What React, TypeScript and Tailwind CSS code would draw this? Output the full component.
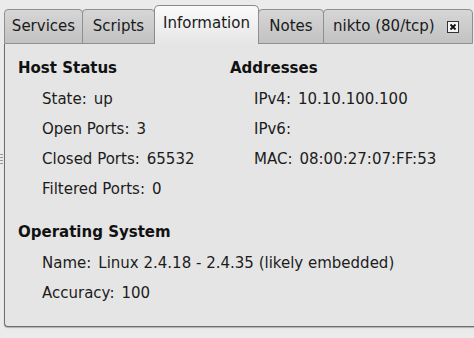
import React from "react";

const font = { fontFamily: '"DejaVu Sans", "Noto Sans", sans-serif' };

function Tab({ label, active, className, children }: { label: string; active?: boolean; className: string; children?: React.ReactNode }) {
  return (
    <div
      className={
        active
          ? `shrink-0 whitespace-nowrap h-[39px] flex items-center justify-center border border-b-0 border-[#8a8a8a] rounded-t-[5px] bg-gradient-to-b from-[#fafafa] to-[#e6e6e6] pb-[4px] ${className}`
          : `shrink-0 whitespace-nowrap h-[35px] flex items-center justify-center border border-[#8f8f8f] rounded-t-[4px] bg-gradient-to-b from-[#d6d6d6] to-[#c2c2c2] ${className}`
      }
    >
      <span className="text-[15px] text-[#1a1a1a] leading-none">{label}</span>
      {children}
    </div>
  );
}

function Row({ label, value }: { label: string; value?: string }) {
  return (
    <div className="h-[30px] flex items-center text-[15px] text-[#1c1c1c] whitespace-pre">
      <span>{label}</span>
      {value !== undefined && <span className="ml-[7px]">{value}</span>}
    </div>
  );
}

function Heading({ children }: { children: React.ReactNode }) {
  return <div className="h-[22px] mb-[5px] flex items-center text-[15px] font-bold text-[#111]">{children}</div>;
}

export default function App() {
  return (
    <div className="w-[474px] h-[338px] bg-[#ebebeb] overflow-hidden relative" style={font}>
      <div className="flex items-end pl-[4px] pt-[5px] h-[44px]">
        <Tab label="Services" className="w-[79px]" />
        <Tab label="Scripts" className="w-[73px] -ml-px" />
        <Tab label="Information" active className="w-[105px] -ml-px" />
        <Tab label="Notes" className="w-[66px] -ml-px" />
        <Tab label="nikto (80/tcp)" className="w-[150px] -ml-px justify-start pl-[9px]">
          <div className="ml-[12px] w-[12px] h-[12px] border border-[#333] bg-[#f4f4f4] flex items-center justify-center">
            <svg width="8" height="8" viewBox="0 0 8 8">
              <path d="M1.5 1.5 L6.5 6.5 M6.5 1.5 L1.5 6.5" stroke="#111" strokeWidth="1.8" />
            </svg>
          </div>
        </Tab>
      </div>
      <div className="ml-[4px] mr-[-10px] h-[283px] bg-[#e5e5e5] border-l border-b border-[#6e6e6e] rounded-bl-[4px] shadow-[0_1px_1px_rgba(0,0,0,0.25)] pl-[13px] pt-[13px]">
        <div className="flex">
          <div className="w-[212px]">
            <Heading>Host Status</Heading>
            <div className="pl-[24px]">
              <Row label="State:" value="up" />
              <Row label="Open Ports:" value="3" />
              <Row label="Closed Ports:" value="65532" />
              <Row label="Filtered Ports:" value="0" />
            </div>
          </div>
          <div>
            <Heading>Addresses</Heading>
            <div className="pl-[24px]">
              <Row label="IPv4:" value="10.10.100.100" />
              <Row label="IPv6:" />
              <Row label="MAC:" value="08:00:27:07:FF:53" />
            </div>
          </div>
        </div>
        <div className="mt-[17px]">
          <Heading>Operating System</Heading>
          <div className="pl-[24px]">
            <Row label="Name:" value="Linux 2.4.18 - 2.4.35 (likely embedded)" />
            <Row label="Accuracy:" value="100" />
          </div>
        </div>
      </div>
      <div className="absolute left-0 top-[154px] w-[3px] flex flex-col gap-[2px]">
        <div className="h-px bg-[#999]" />
        <div className="h-px bg-[#999]" />
        <div className="h-px bg-[#999]" />
        <div className="h-px bg-[#999]" />
      </div>
    </div>
  );
}
